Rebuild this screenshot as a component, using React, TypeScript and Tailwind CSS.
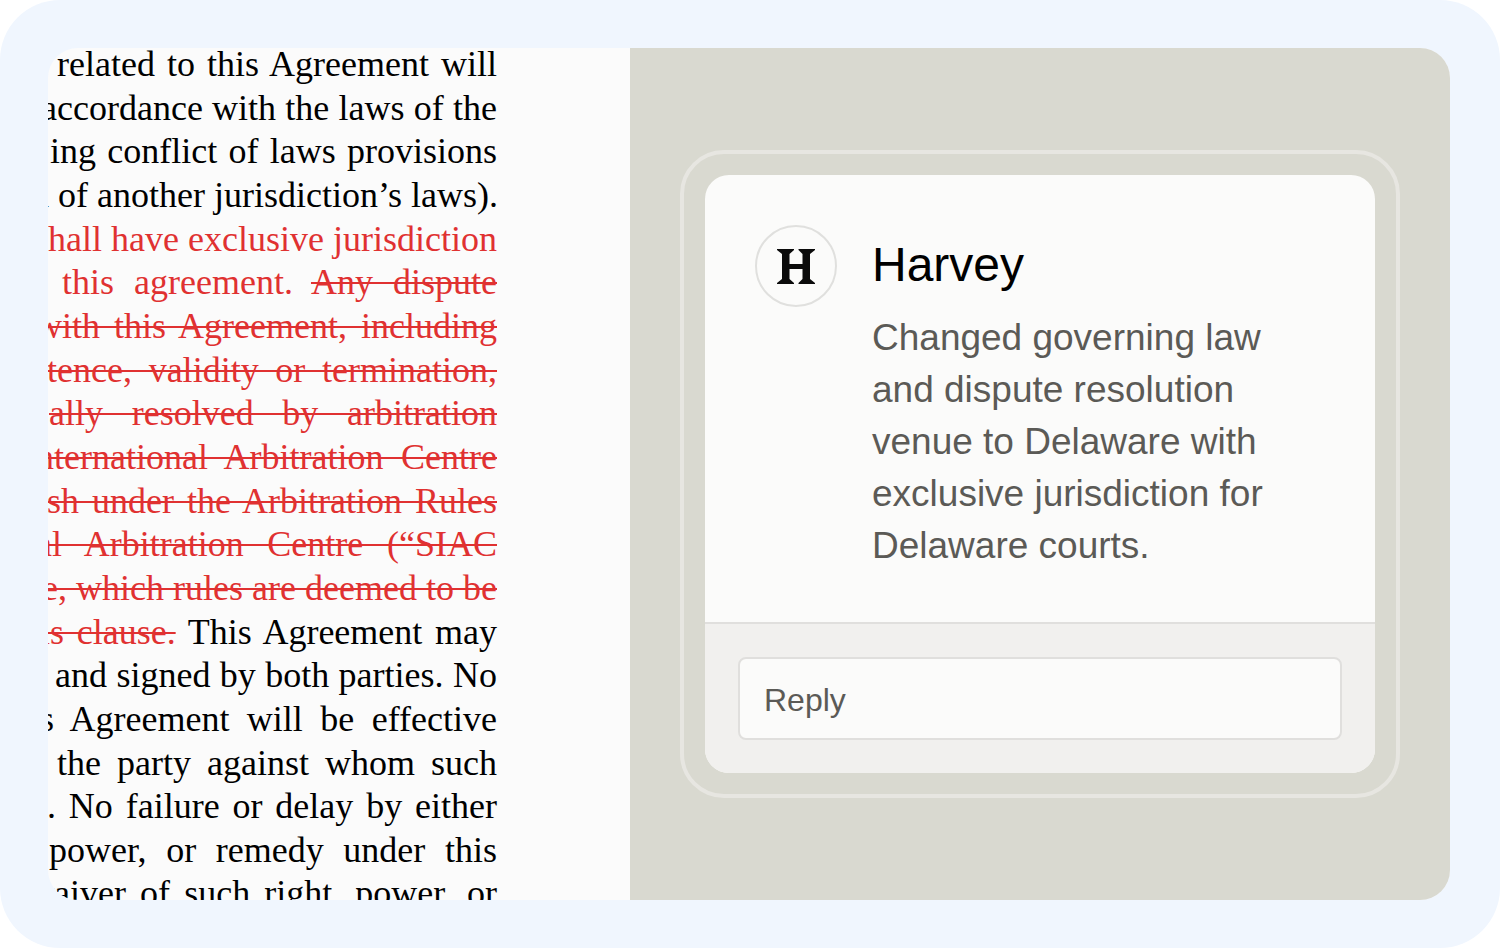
import { useState } from 'react';

type Part = { text: string; kind?: 'added' | 'removed' };
type Line = { width: string; parts: Part[] };

const partStyles = {
  plain: 'text-black',
  added: 'text-[#e03131]',
  removed: 'text-[#e03131] line-through decoration-2',
};

// Each line is justified against the right margin of the page
const lines: Line[] = [
  { width: 'w-[440px]', parts: [{ text: 'related to this Agreement will' }] },
  { width: 'w-[456px]', parts: [{ text: 'accordance with the laws of the' }] },
  { width: 'w-[447px]', parts: [{ text: 'ing conflict of laws provisions' }] },
  { width: 'w-[466px]', parts: [{ text: 'n of another jurisdiction’s laws).' }] },
  { width: 'w-[449px]', parts: [{ text: 'hall have exclusive jurisdiction', kind: 'added' }] },
  {
    width: 'w-[435px]',
    parts: [
      { text: 'this agreement. ', kind: 'added' },
      { text: 'Any dispute', kind: 'removed' },
    ],
  },
  { width: 'w-[461px]', parts: [{ text: 'with this Agreement, including', kind: 'removed' }] },
  { width: 'w-[450px]', parts: [{ text: 'tence, validity or termination,', kind: 'removed' }] },
  { width: 'w-[448px]', parts: [{ text: 'ally resolved by arbitration', kind: 'removed' }] },
  { width: 'w-[461px]', parts: [{ text: 'nternational Arbitration Centre', kind: 'removed' }] },
  { width: 'w-[450px]', parts: [{ text: 'sh under the Arbitration Rules', kind: 'removed' }] },
  { width: 'w-[461px]', parts: [{ text: 'al Arbitration Centre (“SIAC', kind: 'removed' }] },
  { width: 'w-[455px]', parts: [{ text: 'e, which rules are deemed to be', kind: 'removed' }] },
  {
    width: 'w-[457px]',
    parts: [{ text: 'is clause.', kind: 'removed' }, { text: ' This Agreement may' }],
  },
  { width: 'w-[442px]', parts: [{ text: 'and signed by both parties. No' }] },
  { width: 'w-[457px]', parts: [{ text: 's Agreement will be effective' }] },
  { width: 'w-[440px]', parts: [{ text: 'the party against whom such' }] },
  { width: 'w-[450px]', parts: [{ text: '. No failure or delay by either' }] },
  { width: 'w-[448px]', parts: [{ text: 'power, or remedy under this' }] },
  { width: 'w-[469px]', parts: [{ text: 'waiver of such right, power, or' }] },
];

export default function App() {
  return (
    <main className="min-h-screen rounded-[60px] bg-[#f0f6fe] py-12 pl-12 pr-[50px]">
      <div className="grid grid-cols-[582fr_820fr] overflow-hidden rounded-[30px] bg-[#fbfbfb]">
        <ContractPage />
        <CommentPanel />
      </div>
    </main>
  );
}

function ContractPage() {
  return (
    <section aria-label="Contract" className="h-[852px] min-w-0 overflow-hidden">
      <div className="-mt-[2px] mr-[133px] flex h-[873px] flex-col items-end font-['Liberation_Serif',serif] text-[36px] leading-none">
        {lines.map((line, i) => (
          <p
            key={i}
            className={`${line.width} flex-1 whitespace-nowrap text-justify [text-align-last:justify]`}
          >
            {line.parts.map((part) => (
              <span key={part.text} className={partStyles[part.kind ?? 'plain']}>
                {part.text}
              </span>
            ))}
          </p>
        ))}
      </div>
    </section>
  );
}

function CommentPanel() {
  const [reply, setReply] = useState('');

  return (
    <aside className="flex min-w-0 items-center bg-[#d9d9d0] px-[50px] font-['Liberation_Sans',sans-serif]">
      <div className="w-full rounded-[44px] border-4 border-[#e7e6e1] p-[21px]">
        <article className="overflow-hidden rounded-3xl bg-[#fbfbfa]">
          <div className="flex h-[447px] gap-[35px] pl-[50px] pr-12 pt-[50px]">
            <span className="flex size-[82px] shrink-0 items-center justify-center rounded-full border-2 border-[#e0e0de]">
              <HarveyMark />
            </span>
            <div>
              <h2 className="text-[48px] leading-[80px] text-black">Harvey</h2>
              <p className="mt-[7px] max-w-[410px] text-[37px] leading-[52px] text-[#5b5a56]">
                Changed governing law and dispute resolution venue to Delaware with exclusive
                jurisdiction for Delaware courts.
              </p>
            </div>
          </div>
          <form
            onSubmit={(e) => e.preventDefault()}
            className="border-t-2 border-[#e0dfdd] bg-[#f1f0ee] p-[33px]"
          >
            <input
              type="text"
              aria-label="Reply"
              placeholder="Reply"
              value={reply}
              onChange={(e) => setReply(e.target.value)}
              className="block h-[83px] w-full rounded-lg border-2 border-[#e0dfdd] bg-[#fbfbfa] px-6 pt-1 text-[32px] text-[#5b5a56] outline-none placeholder:text-[#5b5a56]"
            />
          </form>
        </article>
      </div>
    </aside>
  );
}

function HarveyMark() {
  return (
    <svg viewBox="0 0 38 35" className="h-[35px] w-[38px]" fill="#0b0b0b" aria-hidden>
      <path d="M0 0H17V1L12.5 5V15H25.5V5L21.5 1V0H38V1L33 5V30L38 34V35H21.5V34L25.5 30V20H12.5V30L17 34V35H0V34L5 30V5L0 1Z" />
    </svg>
  );
}
